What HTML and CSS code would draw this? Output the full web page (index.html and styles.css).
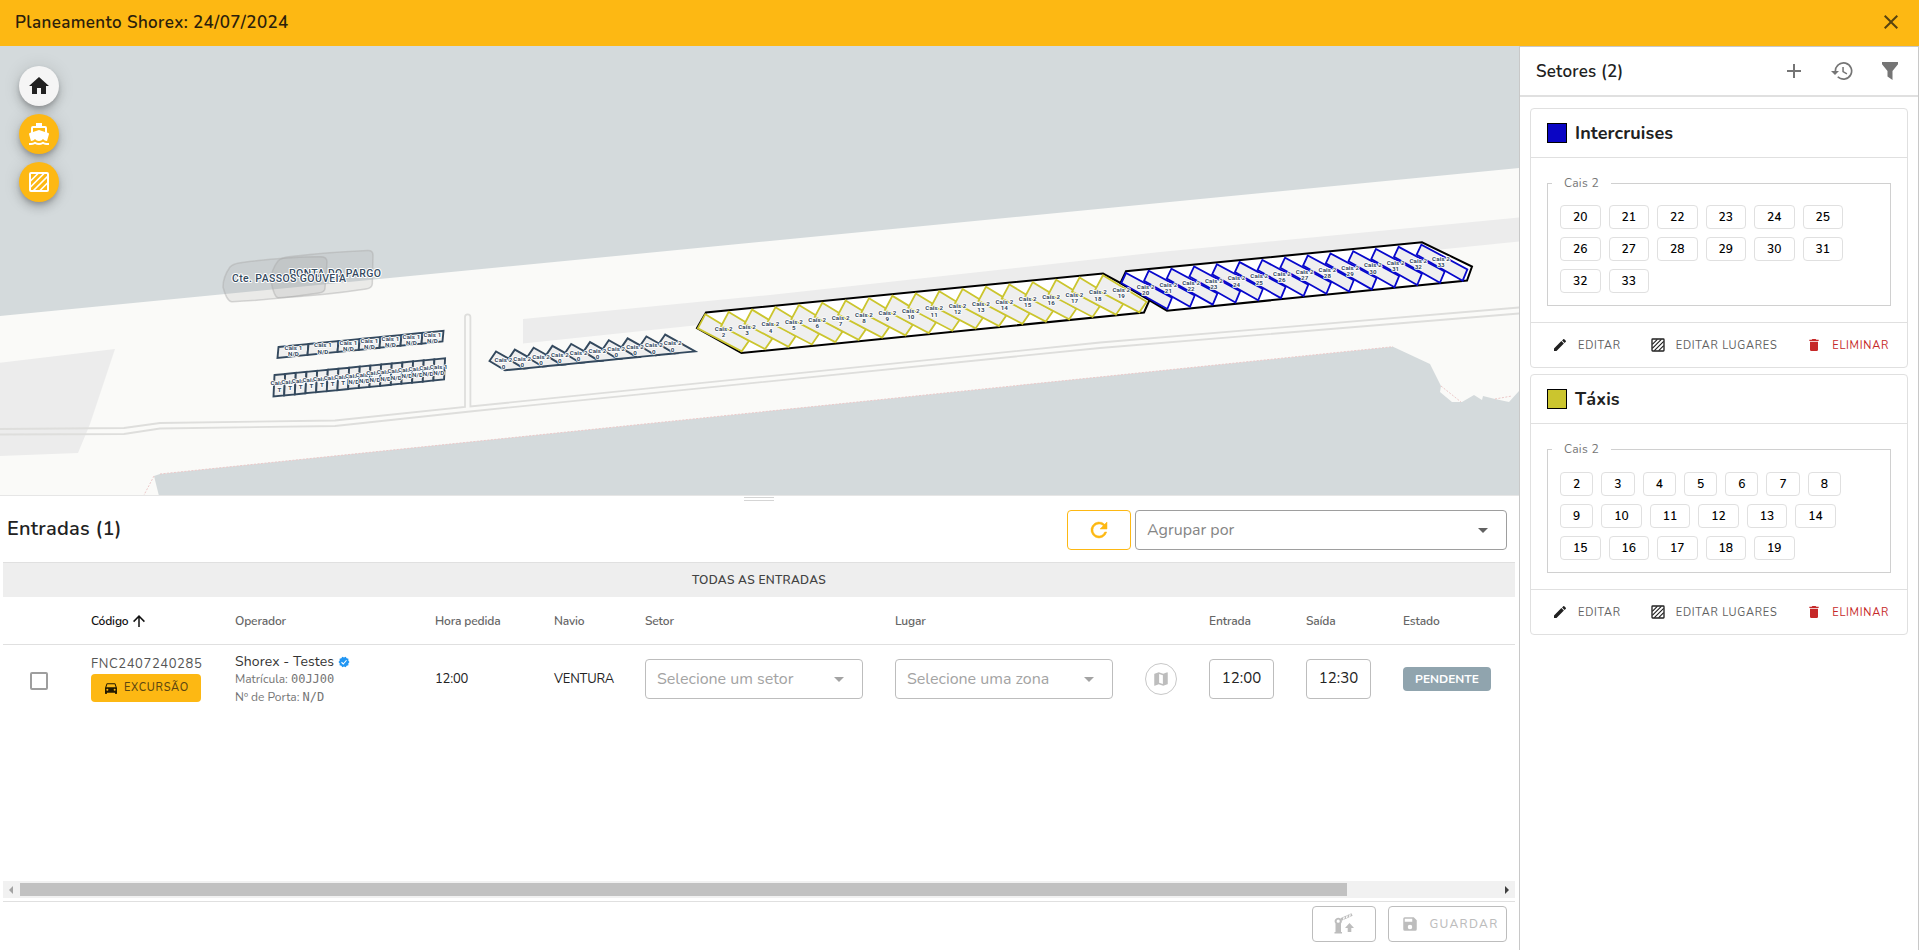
FILE: index.html
```html
<!DOCTYPE html>
<html lang="pt">
<head>
<meta charset="utf-8">
<title>Planeamento Shorex</title>
<link rel="stylesheet" href="styles.css">
</head>
<body>
<svg class="defs" width="0" height="0">
  <symbol id="i-texture" viewBox="0 0 24 24"><g fill="none" stroke="currentColor"><rect x="3" y="3" width="18" height="18" rx="1" stroke-width="2"/><path stroke-width="1.700" d="M3.500 11 11 3.500M3.500 17 17 3.500M6.500 20.500 20.500 6.500M13 20.500 20.500 13"/></g></symbol>
  <symbol id="i-pencil" viewBox="0 0 24 24"><path fill="currentColor" d="M20.710 7.040c.39-.39.39-1.040 0-1.410l-2.340-2.340c-.37-.39-1.020-.39-1.410 0l-1.840 1.830 3.750 3.750M3 17.250V21h3.750L17.810 9.930l-3.750-3.750z"/></symbol>
  <symbol id="i-trash" viewBox="0 0 24 24"><path fill="currentColor" d="M19 4h-3.500l-1-1h-5l-1 1H5v2h14M6 19a2 2 0 0 0 2 2h8a2 2 0 0 0 2-2V7H6z"/></symbol>
  <symbol id="i-down" viewBox="0 0 24 24"><path fill="currentColor" d="m7 10 5 5 5-5z"/></symbol>
</svg>
<header class="topbar">
  <h1>Planeamento Shorex: 24/07/2024</h1>
  <svg width="24" height="24" viewBox="0 0 24 24"><path fill="currentColor" d="M19 6.410 17.590 5 12 10.590 6.410 5 5 6.410 10.590 12 5 17.590 6.410 19 12 13.410 17.590 19 19 17.590 13.410 12z"/></svg>
</header>
<div class="shell">
  <main class="main">
    <section class="map">
      <svg class="mapart" viewBox="0 46 1519 449" width="1519" height="449">
        <path fill="#fafaf8" d="M0 316 1519 168V391L1509 402 1495 399 1483 396 1482 400 1474 395 1462 402H1452L1440 392 1441 386 1430 364 1393 346.700 160 474 154 476 159 496H0z"/>
        <path fill="#ececec" d="M523 319 770 295 1160 252 1519 217.500V241.500L680 327 523 343.500z"/>
        <path fill="#ececec" d="M-2 363 115 349 90 424 78 453-2 456z"/>
        <path class="coast" d="M160 474 1393 346.700M154 476 144 495M1441 386 1461 402M1495 399 1512 396"/>
        <path class="road" d="M0 429 124 428 160 423 335 420.500 465 407V317a2.700 2.700 0 0 1 5.400 0V406.500L1100 342.500 1519 307.500M0 434.500 124 434 160 428.500 335 426 470 411.500 1100 348 1519 313.500"/>
        <g class="ship">
          <path d="M223 287Q223 277 230 267 233 264 239 263 280 257 320 256.700 327 256.500 327 262L325 288Q325 292 319 293 275 300 232 301.700 227 302 223 287z"/>
          <path d="M271 281Q271 270 278 261 281 258 287 257 330 252 368 250.600 373 250.500 373 255L372.300 284Q372 288 366 289 320 296 278 297.700 274 297 271 281z"/>
        </g>
        <g id="stalls"></g>
        <g class="shipname"><text x="335" y="276.800" textLength="92">PONTA DO PARGO</text><text x="289" y="281.800" textLength="114">Cte. PASSOS GOUVEIA</text></g>
      </svg>
      <div class="fabs">
        <button class="fab home"><svg width="24" height="24" viewBox="0 0 24 24"><path fill="currentColor" d="M10 20v-6h4v6h5v-8h3L12 3 2 12h3v8z"/></svg></button>
        <button class="fab"><svg width="24" height="24" viewBox="0 0 24 24"><path fill="currentColor" d="M6 6h12v3.960L12 8 6 9.960M3.940 19H4c1.600 0 3-.88 4-2 1 1.120 2.400 2 4 2s3-.88 4-2c1 1.120 2.400 2 4 2h.05l1.900-6.690a1.030 1.030 0 0 0-.66-1.270L20 10.620V6a2 2 0 0 0-2-2h-3V1H9v3H6a2 2 0 0 0-2 2v4.620l-1.290.42a1.030 1.030 0 0 0-.66 1.270M20 21c-1.390 0-2.780-.47-4-1.330a6.850 6.850 0 0 1-8 0C6.780 20.530 5.390 21 4 21H2v2h2c1.370 0 2.740-.35 4-1 2.500 1.300 5.500 1.300 8 0 1.260.65 2.620 1 4 1h2v-2z"/></svg></button>
        <button class="fab"><svg width="24" height="24"><use href="#i-texture"/></svg></button>
      </div>
    </section>
    <div class="handle"><i></i></div>
    <section class="entries">
      <div class="toolbar">
        <h2>Entradas (1)</h2>
        <button class="refresh"><svg width="24" height="24" viewBox="0 0 24 24"><path fill="currentColor" stroke="currentColor" stroke-width=".5" d="M17.650 6.350A8 8 0 1 0 19.730 14h-2.080A6 6 0 1 1 12 6c1.660 0 3.140.69 4.220 1.780L13 11h7V4z"/></svg></button>
        <div class="select group"><span>Agrupar por</span><svg width="24" height="24"><use href="#i-down"/></svg></div>
      </div>
      <div class="table">
        <div class="banner">TODAS AS ENTRADAS</div>
        <div class="row head">
          <span></span><span class="sorted">Código<svg width="18" height="18" viewBox="0 0 24 24"><path fill="currentColor" d="M13 20h-2V8l-5.500 5.500-1.420-1.420L12 4.160l7.920 7.920-1.420 1.420L13 8z"/></svg></span>
          <span>Operador</span><span>Hora pedida</span><span>Navio</span><span>Setor</span><span>Lugar</span><span></span><span>Entrada</span><span>Saída</span><span>Estado</span>
        </div>
        <div class="row body">
          <span class="check"></span>
          <div class="code"><span>FNC2407240285</span><button class="exc"><svg width="16" height="16" viewBox="0 0 24 24"><path fill="currentColor" d="m5 11 1.500-4.500h11L19 11m-1.500 5a1.500 1.500 0 1 1 0-3 1.500 1.500 0 0 1 0 3m-11 0a1.500 1.500 0 1 1 0-3 1.500 1.500 0 0 1 0 3M18.920 6c-.2-.58-.76-1-1.420-1h-11c-.66 0-1.220.42-1.420 1L3 12v8a1 1 0 0 0 1 1h1a1 1 0 0 0 1-1v-1h12v1a1 1 0 0 0 1 1h1a1 1 0 0 0 1-1v-8z"/></svg><span>EXCURSÃO</span></button></div>
          <div class="op"><div class="opname"><span>Shorex - Testes</span><svg width="12" height="12" viewBox="0 0 24 24"><path fill="#2196f3" d="m23 12-2.440-2.780.34-3.680-3.610-.82-1.890-3.180L12 3 8.600 1.540 6.710 4.720l-3.610.81.340 3.680L1 12l2.440 2.780-.34 3.690 3.610.82 1.890 3.180L12 21l3.400 1.460 1.890-3.180 3.610-.82-.34-3.680z"/><path fill="none" stroke="#fff" stroke-width="2.200" d="m7 12.500 3.500 3.500L17 8.500"/></svg></div><div>Matrícula: <code>00JJ00</code></div><div>Nº de Porta: <code>N/D</code></div></div>
          <span class="v">12:00</span><span class="v navio">VENTURA</span>
          <div class="select dis"><span>Selecione um setor</span><svg width="24" height="24"><use href="#i-down"/></svg></div>
          <div class="select dis"><span>Selecione uma zona</span><svg width="24" height="24"><use href="#i-down"/></svg></div>
          <span class="mapbtn"><svg width="18" height="18" viewBox="0 0 24 24"><path fill="currentColor" fill-rule="evenodd" d="m20.500 3-.16.030L15 5.100 9 3 3.360 4.900A.5.5 0 0 0 3 5.380V20.500a.5.5 0 0 0 .66.470L9 18.900l6 2.100 5.640-1.900a.5.5 0 0 0 .36-.48V3.500a.5.5 0 0 0-.5-.5M9.500 5.300v11.700l5 1.800V7.100z"/></svg></span>
          <span class="time">12:00</span><span class="time">12:30</span><span class="badge">PENDENTE</span>
        </div>
        <div class="scroll"><i class="al"></i><b></b><i class="ar"></i></div>
      </div>
      <footer class="actions">
        <button class="gate"><svg width="24" height="24" viewBox="0 0 24 24"><path fill="currentColor" fill-rule="evenodd" d="M2.500 21.500V20h1v-8.500a3.500 3.500 0 1 1 5.500 0V20h1v1.500zM6.200 7.600a1.600 1.600 0 1 0 0 3.200 1.600 1.600 0 0 0 0-3.200M17.500 11l4.500 5h-2.700v4h-3.600v-4H13z"/><path fill="none" stroke="currentColor" stroke-width="3" d="m9 7.500 11-5"/><path fill="none" stroke="#fff" stroke-width="1.200" d="m11.500 7.500.8-2.500M14.500 6l.8-2.500M17.500 4.700l.8-2.500"/></svg></button>
        <button class="save"><svg width="18" height="18" viewBox="0 0 24 24"><path fill="currentColor" d="M15 9H5V5h10m-3 14a3 3 0 1 1 0-6 3 3 0 0 1 0 6m5-16H5a2 2 0 0 0-2 2v14a2 2 0 0 0 2 2h14a2 2 0 0 0 2-2V7z"/></svg><span>GUARDAR</span></button>
      </footer>
    </section>
  </main>
  <aside class="side">
    <div class="sidehead"><h3>Setores (2)</h3>
      <svg width="24" height="24" viewBox="0 0 24 24"><path fill="currentColor" d="M19 13h-6v6h-2v-6H5v-2h6V5h2v6h6z"/></svg>
      <svg width="24" height="24" viewBox="0 0 24 24"><path fill="currentColor" d="M13.500 3a9 9 0 0 0-9 9H1l4 4 4-4H6.200a7.300 7.300 0 1 1 2.150 5.150l-1.220 1.220A9 9 0 1 0 13.500 3m-1.200 5v5l4.280 2.540.72-1.210-3.500-2.080V8z"/></svg>
      <svg width="24" height="24" viewBox="0 0 24 24"><path fill="currentColor" d="M4 3h16v2.200L14.500 12v9L9.500 17.500V12L4 5.200z"/></svg>
    </div>
    <div class="cards">
      <article class="card">
        <h4><i class="swatch blue"></i><span>Intercruises</span></h4>
        <div class="cardbody"><fieldset><legend>Cais 2</legend><div class="chips"><b>20</b><b>21</b><b>22</b><b>23</b><b>24</b><b>25</b><b>26</b><b>27</b><b>28</b><b>29</b><b>30</b><b>31</b><b>32</b><b>33</b></div></fieldset></div>
        <div class="cardfoot"><button><svg width="16" height="16"><use href="#i-pencil"/></svg><span>EDITAR</span></button><button class="places"><svg width="16" height="16"><use href="#i-texture"/></svg><span>EDITAR LUGARES</span></button><button class="delete"><svg width="16" height="16"><use href="#i-trash"/></svg><span>ELIMINAR</span></button></div>
      </article>
      <article class="card">
        <h4><i class="swatch yellow"></i><span>Táxis</span></h4>
        <div class="cardbody low"><fieldset><legend>Cais 2</legend><div class="chips"><b class="s">2</b><b class="s">3</b><b class="s">4</b><b class="s">5</b><b class="s">6</b><b class="s">7</b><b class="s">8</b><b class="s">9</b><b>10</b><b>11</b><b>12</b><b>13</b><b>14</b><b>15</b><b>16</b><b>17</b><b>18</b><b>19</b></div></fieldset></div>
        <div class="cardfoot"><button><svg width="16" height="16"><use href="#i-pencil"/></svg><span>EDITAR</span></button><button class="places"><svg width="16" height="16"><use href="#i-texture"/></svg><span>EDITAR LUGARES</span></button><button class="delete"><svg width="16" height="16"><use href="#i-trash"/></svg><span>ELIMINAR</span></button></div>
      </article>
    </div>
  </aside>
</div>
<script src="stalls.js"></script>
</body>
</html>
```
FILE: stalls.js
```js
// Parking stalls: outlines first, labels on top of every outline.
var shapes = '', labels = '';

function poly(points, cls) {
  shapes += '<polygon class="' + cls + '" points="' + points.join(' ') + '"/>';
}

function label(x, y, quay, place) {
  labels += '<text x="' + x + '" y="' + y + '">' + quay + '</text>' +
    '<text x="' + x + '" y="' + (y + 6.2) + '">' + place + '</text>';
}

function slanted(base, count, dx, dy, cls, lx, ly, first) {
  for (var i = 0; i < count; i++) {
    poly(base.map(function (p) { return (p[0] + i * dx) + ',' + (p[1] + i * dy); }), cls);
    label(lx + i * dx, ly + i * dy, 'Cais 2', first === 0 ? 0 : first + i);
  }
}

function row(xs, top, bottom, cls) {
  for (var i = 0; i < xs.length - 1; i++) {
    poly([xs[i] + ',' + top(xs[i]), xs[i + 1] + ',' + top(xs[i + 1]),
      (xs[i + 1] - 1) + ',' + bottom(xs[i + 1]), (xs[i] - 1) + ',' + bottom(xs[i])], cls);
  }
}

// Quay 1
var xs = [278.5, 308.5, 338.5, 359.7, 380.5, 401.5, 422.5, 443.5];
row(xs, function (x) { return 347 - (x - 278.5) * 0.098; }, function (x) { return 358 - (x - 278.5) * 0.1; }, 'dark');
[293.5, 323, 348.5, 369.5, 390.5, 411.5, 432.5].forEach(function (x) {
  label(x, 350.2 - (x - 293.5) * 0.093, 'Cais 1', 'N/D');
});
var xs2 = [];
for (var k = 0; k <= 16; k++) xs2.push(274.5 + k * 10.66);
row(xs2, function (x) { return 375 - (x - 274.5) * 0.098; }, function (x) { return 396.5 - (x - 274.5) * 0.1; }, 'dark');
for (k = 0; k < 16; k++) label(279.5 + k * 10.62, 385.3 - k * 1.09, 'Cais 1', k < 7 ? 'T' : 'N/D');

// Quay 2
slanted([[489.5, 361], [496, 351.5], [526, 368.3], [505, 370.3]], 10, 18.8, -1.88, 'dark', 503.5, 362.4, 0);
poly(['697,328', '706,312.5', '1103,273.5', '1150,299', '1144,312.5', '741.5,353'], 'area');
slanted([[697.8, 328.3], [705.3, 314.2], [749, 340.7], [741.7, 351.3]], 18, 23.39, -2.29, 'lime', 723.7, 331, 2);
poly(['1120.5,283', '1126,271.2', '1422,242.3', '1472,266.5', '1467,280.5', '1167,310.7'], 'area');
slanted([[1121.3, 283], [1126, 273], [1172, 297.7], [1167.3, 309]], 14, 22.72, -2.18, 'blue', 1145.7, 289.2, 20);

document.getElementById('stalls').innerHTML = shapes + labels;
```
FILE: styles.css
```css
* { box-sizing: border-box; }
body { margin: 0; height: 950px; overflow: hidden; background: #fff; color: #212121; font-family: "Nunito", "Open Sans", sans-serif; font-size: 13px; }
h1, h2, h3, h4 { margin: 0; font-weight: 600; }
button { font: inherit; letter-spacing: inherit; padding: 0; border: 0; background: none; color: inherit; display: flex; align-items: center; }
svg { display: block; flex: none; }
span { white-space: nowrap; }
.defs { position: absolute; }
.topbar { height: 46px; background: #fdb813; display: flex; align-items: center; justify-content: space-between; padding: 0 16px 2px 15px; }
.topbar h1 { font-size: 17px; letter-spacing: .4px; color: #2b200b; }
.topbar svg { color: #58430f; }
.shell { display: flex; height: 904px; }
.main { width: 1519px; display: flex; flex-direction: column; }
.map { height: 449px; background: #d4dadc; position: relative; }
.coast { fill: none; stroke: #ecc9c9; stroke-dasharray: 2 1.5; }
.road { fill: none; stroke: #dededc; stroke-width: 1.8; }
.ship path { fill: #9a9a9a; fill-opacity: .17; stroke: #aaa; stroke-opacity: .45; stroke-width: 1.5; }
.shipname, #stalls { font-family: Roboto, sans-serif; text-anchor: middle; font-weight: 500; fill: #34495e; paint-order: stroke; stroke: #fff; stroke-width: 2px; stroke-linejoin: round; }
.shipname { font-size: 10.5px; }
#stalls text { font-size: 6.2px; font-weight: 700; stroke-width: 1.6px; letter-spacing: .1px; }
#stalls polygon { fill: #efefef; stroke-linejoin: miter; paint-order: normal; }
#stalls .dark { stroke: #34495e; stroke-width: 1.9; }
#stalls .lime { stroke: #cbc52e; stroke-width: 1.8; }
#stalls .blue { stroke: #0808cc; stroke-width: 1.8; }
#stalls .area { fill: #fff; stroke: #000; stroke-width: 2; }
.fabs { position: absolute; left: 19px; top: 20px; display: grid; gap: 8px; }
.fab { width: 40px; height: 40px; border-radius: 50%; background: #fdb813; color: #fff; justify-content: center; box-shadow: 0 3px 5px -1px rgba(0,0,0,.2), 0 6px 10px rgba(0,0,0,.14), 0 1px 18px rgba(0,0,0,.12); }
.fab.home { background: #f5f5f5; color: #212121; }
.handle { height: 7px; border-top: 1px solid #e6e6e6; display: flex; justify-content: center; padding: 1px 2px 0 0; }
.handle i { width: 30px; height: 4px; border: solid #d5d5d5; border-width: 1px 0; }
.entries { flex: 1; display: flex; flex-direction: column; padding: 0 4px 0 3px; }
.toolbar { height: 60px; display: flex; padding: 8px 8px 0 4px; gap: 4px; }
.toolbar h2 { font-size: 20px; line-height: 37px; flex: 1; letter-spacing: .25px; }
.refresh { width: 64px; height: 40px; border: 1px solid #fdb813; border-radius: 4px; color: #fdb813; justify-content: center; }
.select { height: 40px; border: 1px solid #bdbdbd; border-radius: 4px; display: flex; align-items: center; justify-content: space-between; padding: 0 11px; font-size: 16px; color: #a3a3a3; }
.group { width: 372px; border-color: #9e9e9e; color: #858585; }
.group svg { color: #616161; }
.dis { width: 218px; }
.table { height: 340px; border-bottom: 1px solid #e0e0e0; display: flex; flex-direction: column; }
.banner { height: 35px; background: #eee; border-top: 1px solid #e0e0e0; text-align: center; line-height: 34px; font-size: 12px; font-weight: 600; color: #424242; letter-spacing: .3px; }
.row { display: grid; grid-template-columns: 88px 144px 200px 119px 91px 250px 250px 64px 97px 97px 90px; align-items: center; }
.head { height: 48px; border-bottom: 1px solid #e0e0e0; font-size: 12px; font-weight: 600; color: #666; letter-spacing: -.15px; }
.sorted { color: #111; display: flex; align-items: center; gap: 1px; }
.body { height: 67px; }
.check { width: 18px; height: 18px; border: 2px solid #9e9e9e; border-radius: 2px; margin: 4px 0 0 27px; }
.code { font-size: 13px; letter-spacing: .6px; color: #555; line-height: 18px; }
.exc { width: 110px; height: 28px; margin-top: 1px; border-radius: 4px; background: #fdb813; color: #231a00; font-size: 11px; padding-left: 12px; gap: 5px; }
.exc span { color: #5c4610; font-weight: 500; letter-spacing: .7px; }
.op { font-size: 12px; color: #757575; line-height: 17.500px; padding-top: 2px; }
.opname { display: flex; align-items: center; gap: 4px; font-size: 14px; letter-spacing: .1px; color: #333; line-height: 18px; }
.op code { font: 12px "DejaVu Sans Mono", monospace; }
.v { font-size: 13px; color: #222; letter-spacing: -.2px; }
.mapbtn { width: 32px; height: 32px; border: 1px solid #c8c8c8; border-radius: 50%; color: #bdbdbd; display: grid; place-content: center; }
.time { width: 65px; height: 40px; border: 1px solid #bdbdbd; border-radius: 4px; font-size: 15px; line-height: 37px; text-align: center; color: #222; }
.badge { width: 88px; height: 24px; border-radius: 4px; background: #90a4ae; color: #fff; font-size: 12px; font-weight: 700; line-height: 24px; text-align: center; }
.scroll { height: 17px; margin-top: auto; margin-bottom: 3px; background: #f1f1f1; display: flex; align-items: center; padding: 0 6px; }
.scroll b { width: 1327px; height: 13px; margin: 0 auto 0 7px; background: #c1c1c1; }
.al, .ar { border: solid transparent; border-width: 4px 0; }
.al { border-right: 4px solid #a3a3a3; }
.ar { border-left: 4px solid #404040; }
.actions { display: flex; justify-content: flex-end; gap: 12px; padding: 4px 8px 0 0; }
.gate, .save { height: 36px; border: 1px solid #bdbdbd; border-radius: 4px; color: #bdbdbd; justify-content: center; }
.gate { width: 64px; }
.save { width: 119px; gap: 10px; padding-left: 5px; font-size: 12px; letter-spacing: 1.3px; font-weight: 500; }
.side { width: 400px; border: solid #c8c8c8; border-width: 1px 1px 0; }
.sidehead { height: 50px; border-bottom: 2px solid #e0e0e0; display: flex; align-items: center; padding: 0 16px; gap: 24px; color: #757575; }
.sidehead h3 { font-size: 17px; flex: 1; color: #212121; letter-spacing: .2px; }
.cards { padding: 11px 10px; display: grid; gap: 6px; }
.card { border: 1px solid #e0e0e0; border-radius: 4px; }
.card h4 { height: 49px; border-bottom: 1px solid #e0e0e0; padding: 0 16px; display: flex; align-items: center; gap: 8px; font-size: 18px; font-weight: 700; letter-spacing: .1px; }
.swatch { width: 20px; height: 20px; border: 1px solid #000; }
.blue { background: #0a05c4; }
.yellow { background: #cbc52e; }
.cardbody { padding: 16px; height: 165px; border-bottom: 1px solid #e0e0e0; }
fieldset { margin: 0; padding: 13px 12px; border: 1px solid #d0d0d0; height: 132px; min-width: 0; }
.low { height: 166px; }
.low fieldset { height: 133px; padding-top: 14px; }
legend { margin-left: -8px; padding: 0 12px; width: 59px; font-size: 12px; line-height: 18px; color: #757575; letter-spacing: .3px; white-space: nowrap; }
.chips { display: flex; flex-wrap: wrap; gap: 8px; }
.chips b { width: 40.500px; height: 24px; border: 1px solid #e0e0e0; border-radius: 4px; text-align: center; line-height: 22px; font-size: 12px; font-weight: 600; color: #000; }
.chips .s { width: 33.300px; }
.cardfoot { height: 44px; display: flex; align-items: center; justify-content: space-between; padding: 0 18px 0 21px; font-size: 11px; letter-spacing: .72px; color: #616161; }
.cardfoot button { gap: 10px; }
.cardfoot svg { color: #212121; }
.cardfoot .delete, .cardfoot .delete svg { color: #c62828; }
```
